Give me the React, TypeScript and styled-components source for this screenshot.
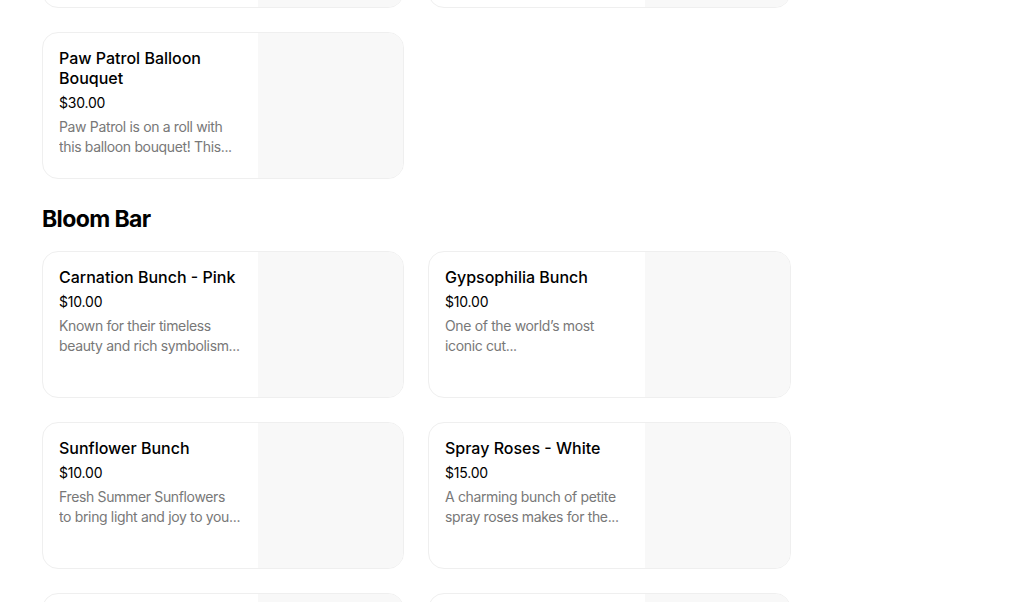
import styled, { createGlobalStyle } from 'styled-components';

interface Item {
  title: string;
  price: string;
  description: string;
}

interface Section {
  name?: string;
  items: Item[];
}

const SECTIONS: Section[] = [
  {
    items: [
      { title: 'Balloon Bouquet', price: '$25.00', description: 'A bright bunch of balloons to lift the mood...' },
      { title: 'Birthday Balloons', price: '$25.00', description: 'Celebrate in style with this balloon set...' },
      {
        title: 'Paw Patrol Balloon Bouquet',
        price: '$30.00',
        description: 'Paw Patrol is on a roll with this balloon bouquet! This...',
      },
    ],
  },
  {
    name: 'Bloom Bar',
    items: [
      {
        title: 'Carnation Bunch - Pink',
        price: '$10.00',
        description: 'Known for their timeless beauty and rich symbolism...',
      },
      {
        title: 'Gypsophilia Bunch',
        price: '$10.00',
        description: 'One of the world\u2019s most iconic cut...',
      },
      {
        title: 'Sunflower Bunch',
        price: '$10.00',
        description: 'Fresh Summer Sunflowers to\u00a0bring light and joy to you...',
      },
      {
        title: 'Spray Roses - White',
        price: '$15.00',
        description: 'A charming bunch of petite spray roses makes for the...',
      },
      { title: 'Tulip Bunch', price: '$15.00', description: 'Fresh tulips in a range of seasonal colours...' },
      { title: 'Lily Bunch', price: '$15.00', description: 'Elegant lilies with a lovely fragrance...' },
    ],
  },
];

const GlobalStyle = createGlobalStyle`
  html, body {
    margin: 0;
    padding: 0;
    background: #ffffff;
    overflow: hidden;
  }
  body {
    font-family: Inter, "Liberation Sans", sans-serif;
    color: #000000;
  }
`;

const Page = styled.main`
  padding: 0 42px;
  margin-top: -139px;
  height: 741px;
  overflow: hidden;
`;

const SectionBlock = styled.section`
  display: flex;
  flex-direction: column;
`;

const SectionTitle = styled.h2`
  margin: 24px 0 16px;
  font-size: 23px;
  line-height: 32px;
  font-weight: 700;
  letter-spacing: -0.6px;
`;

const Grid = styled.div`
  display: grid;
  grid-template-columns: 362px 363px;
  gap: 24px;
`;

const Card = styled.article`
  display: flex;
  height: 147px;
  box-sizing: border-box;
  border: 1px solid #efefef;
  border-radius: 16px;
  overflow: hidden;
  background: #ffffff;
`;

const Info = styled.div`
  flex: 1;
  min-width: 0;
  padding: 15px 12px 16px 16px;
  display: flex;
  flex-direction: column;
`;

const Title = styled.div`
  font-size: 16px;
  line-height: 20px;
  font-weight: 500;
  color: #000000;
`;

const Price = styled.div`
  margin-top: 5px;
  font-size: 14px;
  line-height: 20px;
  letter-spacing: -0.2px;
  color: #000000;
`;

const Description = styled.div`
  margin-top: 4px;
  font-size: 14px;
  line-height: 20px;
  letter-spacing: -0.35px;
  color: #787878;
  display: -webkit-box;
  -webkit-line-clamp: 2;
  -webkit-box-orient: vertical;
  overflow: hidden;
`;

const Thumb = styled.div`
  width: 145px;
  flex-shrink: 0;
  background: #f8f8f8;
`;

const App = () => {
  return (
    <>
      <GlobalStyle />
      <Page>
        {SECTIONS.map((section, i) => (
          <SectionBlock key={i}>
            {section.name && <SectionTitle>{section.name}</SectionTitle>}
            <Grid>
              {section.items.map((item) => (
                <Card key={item.title}>
                  <Info>
                    <Title>{item.title}</Title>
                    <Price>{item.price}</Price>
                    <Description>{item.description}</Description>
                  </Info>
                  <Thumb />
                </Card>
              ))}
            </Grid>
          </SectionBlock>
        ))}
      </Page>
    </>
  );
};

export default App;
